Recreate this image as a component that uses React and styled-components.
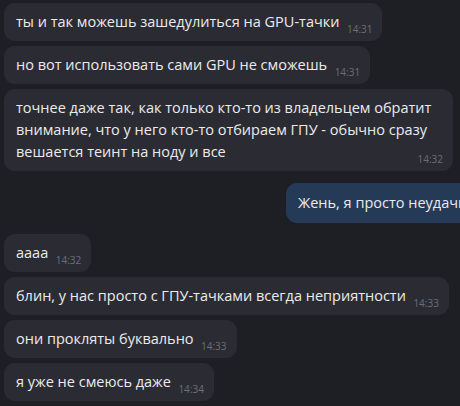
import React from "react";
import styled, { createGlobalStyle } from "styled-components";

const Global = createGlobalStyle`
  html, body { margin: 0; padding: 0; background: #1e1f25; overflow: hidden; }
  body { font-family: "Open Sans", "Noto Sans", sans-serif; }
`;

const Chat = styled.div`
  width: 460px;
  height: 406px;
  box-sizing: border-box;
  padding: 3px 4px;
  display: flex;
  flex-direction: column;
  align-items: flex-start;
  gap: 5px;
  background: #1e1f25;
  overflow: hidden;
`;

const Bubble = styled.div`
  position: relative;
  box-sizing: border-box;
  max-width: ${(p) => (p.$out ? "none" : "449px")};
  padding: ${(p) => (p.$out ? "9px 12px" : "8px 10px 8px 12px")};
  border-radius: 11px;
  background: ${(p) => (p.$out ? "#253a57" : "#2b2c33")};
  color: #ebebed;
  font-size: 14.5px;
  line-height: 22px;
  white-space: ${(p) => (p.$out ? "nowrap" : "normal")};
  margin: ${(p) => (p.$out ? "7px 0 6px 282px" : "0")};
`;

const Spacer = styled.span`
  display: inline-block;
  width: 33px;
`;

const Time = styled.span`
  position: absolute;
  right: 10px;
  bottom: 5px;
  font-size: 10px;
  line-height: 14px;
  color: #6b6e76;
`;

const messages = [
  { text: "ты и так можешь зашедулиться на GPU-тачки", time: "14:31" },
  { text: "но вот использовать сами GPU не сможешь", time: "14:31" },
  {
    text:
      "точнее даже так, как только кто-то из владельцем обратит внимание, что у него кто-то отбираем ГПУ - обычно сразу вешается теинт на ноду и все",
    time: "14:32",
  },
  { text: "Жень, я просто неудачно пошутил", out: true },
  { text: "аааа", time: "14:32" },
  { text: "блин, у нас просто с ГПУ-тачками всегда неприятности", time: "14:33" },
  { text: "они прокляты буквально", time: "14:33" },
  { text: "я уже не смеюсь даже", time: "14:34" },
];

export default function App() {
  return (
    <>
      <Global />
      <Chat>
        {messages.map((m, i) => (
          <Bubble key={i} $out={m.out}>
            {m.text}
            {m.time && (
              <>
                <Spacer />
                <Time>{m.time}</Time>
              </>
            )}
          </Bubble>
        ))}
      </Chat>
    </>
  );
}
